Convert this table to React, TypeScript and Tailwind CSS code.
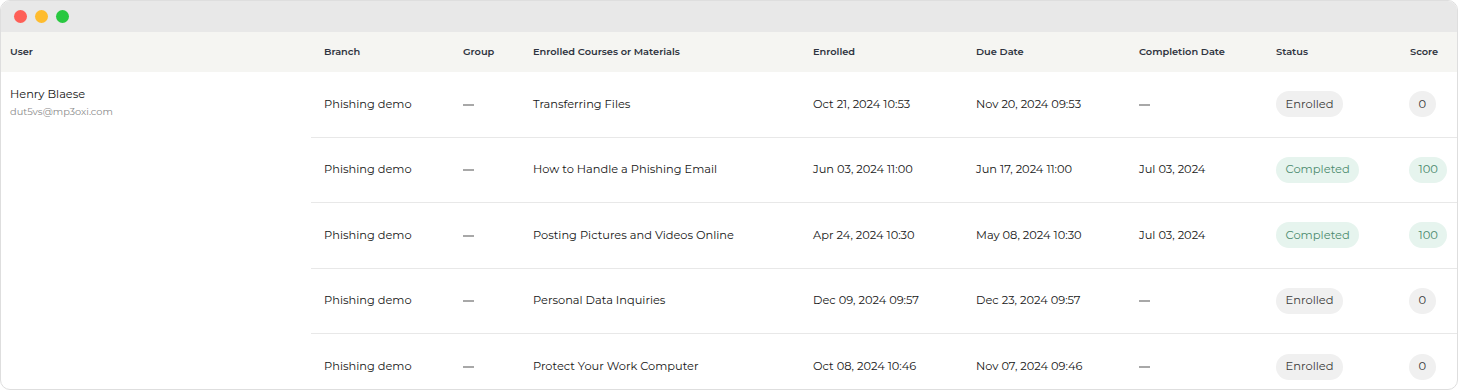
import React from 'react';

type Row = {
  branch: string;
  course: string;
  enrolled: string;
  due: string;
  completed: string | null;
  status: 'Enrolled' | 'Completed';
  score: number;
};

const rows: Row[] = [
  { branch: 'Phishing demo', course: 'Transferring Files', enrolled: 'Oct 21, 2024 10:53', due: 'Nov 20, 2024 09:53', completed: null, status: 'Enrolled', score: 0 },
  { branch: 'Phishing demo', course: 'How to Handle a Phishing Email', enrolled: 'Jun 03, 2024 11:00', due: 'Jun 17, 2024 11:00', completed: 'Jul 03, 2024', status: 'Completed', score: 100 },
  { branch: 'Phishing demo', course: 'Posting Pictures and Videos Online', enrolled: 'Apr 24, 2024 10:30', due: 'May 08, 2024 10:30', completed: 'Jul 03, 2024', status: 'Completed', score: 100 },
  { branch: 'Phishing demo', course: 'Personal Data Inquiries', enrolled: 'Dec 09, 2024 09:57', due: 'Dec 23, 2024 09:57', completed: null, status: 'Enrolled', score: 0 },
  { branch: 'Phishing demo', course: 'Protect Your Work Computer', enrolled: 'Oct 08, 2024 10:46', due: 'Nov 07, 2024 09:46', completed: null, status: 'Enrolled', score: 0 },
];

const cols = 'grid grid-cols-[139px_70px_280px_163px_163px_137px_134px_1fr] items-center';

function Dash() {
  return <span className="inline-block w-[11px] h-[2px] bg-[#a8a8a8] align-middle" />;
}

function Pill({ done, children }: { done: boolean; children: React.ReactNode }) {
  return (
    <span
      className={
        'inline-flex items-center h-[26px] rounded-full px-[9.5px] text-[11.5px] ' +
        (done ? 'bg-[#e6f4ee] text-[#4b8a6d]' : 'bg-[#f0f0f0] text-[#3a3a3a]')
      }
    >
      {children}
    </span>
  );
}

export default function App() {
  return (
    <div className="w-[1458px] h-[390px] bg-white overflow-hidden font-['Montserrat','Open_Sans',sans-serif] text-[#161616]">
      <div className="h-full rounded-[10px] border border-[#dedede] overflow-hidden">
        <div className="h-[31px] bg-[#e8e8e8] flex items-center gap-[8px] pl-[13px]">
          <span className="w-[13px] h-[13px] rounded-full bg-[#fe5f57]" />
          <span className="w-[13px] h-[13px] rounded-full bg-[#febc2e]" />
          <span className="w-[13px] h-[13px] rounded-full bg-[#28c840]" />
        </div>

        <div className="h-[40px] bg-[#f5f5f2] flex items-center text-[9.8px] font-semibold text-[#2f3440]">
          <div className="w-[310px] pl-[9px]">User</div>
          <div className={cols + ' flex-1 [&>div]:pl-[13px]'}>
            <div>Branch</div>
            <div>Group</div>
            <div>Enrolled Courses or Materials</div>
            <div>Enrolled</div>
            <div>Due Date</div>
            <div>Completion Date</div>
            <div>Status</div>
            <div>Score</div>
          </div>
        </div>

        <div className="flex">
          <div className="w-[310px] pl-[9px] pt-[14px]">
            <div className="text-[11.4px] leading-[16px]">Henry Blaese</div>
            <div className="text-[9.8px] text-[#8a8a8a] mt-[3px]">dut5vs@mp3oxi.com</div>
          </div>
          <div className="flex-1">
            {rows.map((r, i) => (
              <div
                key={i}
                className={cols + ' h-[65.5px] text-[11.4px] [&>div]:pl-[13px] ' + (i < rows.length - 1 ? 'border-b border-[#e8e8e8]' : '')}
              >
                <div>{r.branch}</div>
                <div><Dash /></div>
                <div>{r.course}</div>
                <div>{r.enrolled}</div>
                <div>{r.due}</div>
                <div>{r.completed ?? <Dash />}</div>
                <div><Pill done={r.status === 'Completed'}>{r.status}</Pill></div>
                <div className="!pl-[12px]"><Pill done={r.status === 'Completed'}>{r.score}</Pill></div>
              </div>
            ))}
          </div>
        </div>
      </div>
    </div>
  );
}
